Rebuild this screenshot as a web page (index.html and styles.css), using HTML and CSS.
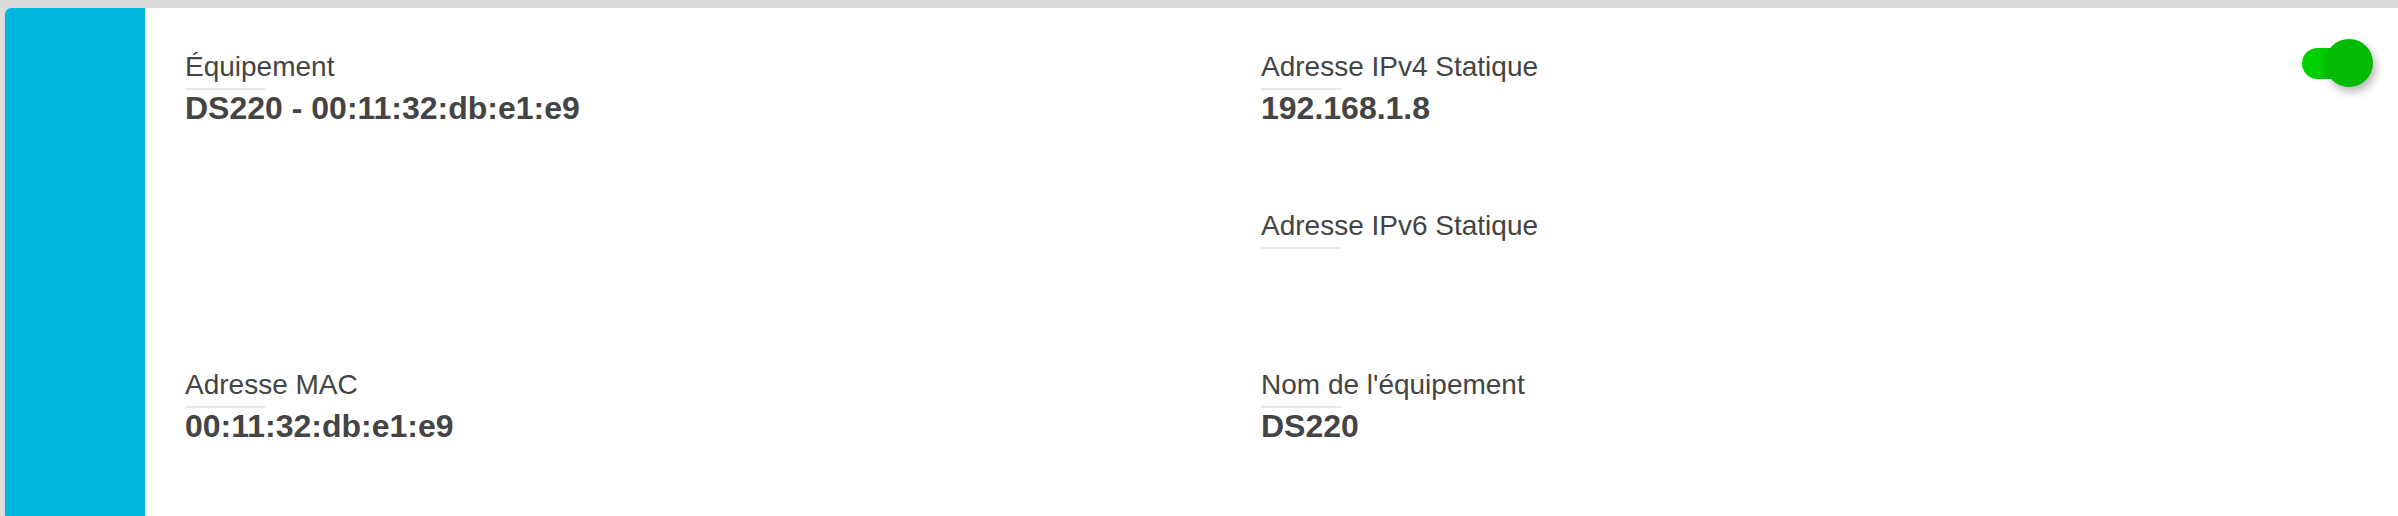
FILE: index.html
```html
<!DOCTYPE html>
<html lang="fr">
<head>
<meta charset="utf-8">
<title>Équipement</title>
<link rel="stylesheet" href="styles.css">
</head>
<body>
<div class="card">
  <div class="card-accent"></div>
  <div class="card-body">
    <div class="field f-device">
      <div class="label">Équipement</div>
      <div class="value">DS220 - 00:11:32:db:e1:e9</div>
    </div>
    <div class="field f-ipv4">
      <div class="label">Adresse IPv4 Statique</div>
      <div class="value">192.168.1.8</div>
    </div>
    <div class="field f-ipv6">
      <div class="label">Adresse IPv6 Statique</div>
      <div class="value"></div>
    </div>
    <div class="field f-mac">
      <div class="label">Adresse MAC</div>
      <div class="value">00:11:32:db:e1:e9</div>
    </div>
    <div class="field f-name">
      <div class="label">Nom de l'équipement</div>
      <div class="value">DS220</div>
    </div>
  </div>
  <div class="toggle">
    <span class="toggle-track"></span>
    <span class="toggle-knob"></span>
  </div>
</div>
</body>
</html>
```
FILE: styles.css
```css
html, body {
  margin: 0;
  padding: 0;
  overflow: hidden;
}
body {
  background: #dcdcdc;
  font-family: "Liberation Sans", Arial, sans-serif;
  color: #444;
  padding: 8px 0 0 5px;
  height: 516px;
  box-sizing: border-box;
}
.card {
  position: relative;
  display: flex;
  background: #fff;
  border-top-left-radius: 6px;
  overflow: hidden;
  height: 508px;
  box-shadow: 0 1px 3px rgba(0,0,0,0.06);
}
.card-accent {
  width: 140px;
  flex: none;
  background: #01b8dc;
}
.card-body {
  flex: 1;
  display: grid;
  grid-template-columns: 1076px 1fr;
  grid-template-rows: 159px 159px 140px;
  padding: 43px 0 0 40px;
}
.f-device { grid-column: 1; grid-row: 1; }
.f-ipv4 { grid-column: 2; grid-row: 1; }
.f-ipv6 { grid-column: 2; grid-row: 2; }
.f-mac { grid-column: 1; grid-row: 3; }
.f-name { grid-column: 2; grid-row: 3; }
.label {
  font-size: 28px;
  line-height: 32px;
  color: #444;
}
.label::after {
  content: "";
  display: block;
  width: 80px;
  height: 2px;
  margin-top: 5px;
  background: #e8e8e8;
}
.value {
  font-size: 32px;
  line-height: 36px;
  font-weight: bold;
  color: #444;
  min-height: 36px;
}
.toggle {
  position: absolute;
  top: 31px;
  right: 25px;
  display: flex;
  align-items: center;
}
.toggle-track {
  display: block;
  width: 53px;
  height: 31px;
  border-radius: 16px;
  background: linear-gradient(90deg, #00d200, #00c300);
}
.toggle-knob {
  display: block;
  width: 48px;
  height: 48px;
  margin-left: -30px;
  border-radius: 50%;
  background: #02bb02;
  box-shadow: 3px 5px 9px rgba(0,0,0,0.28);
}
```
